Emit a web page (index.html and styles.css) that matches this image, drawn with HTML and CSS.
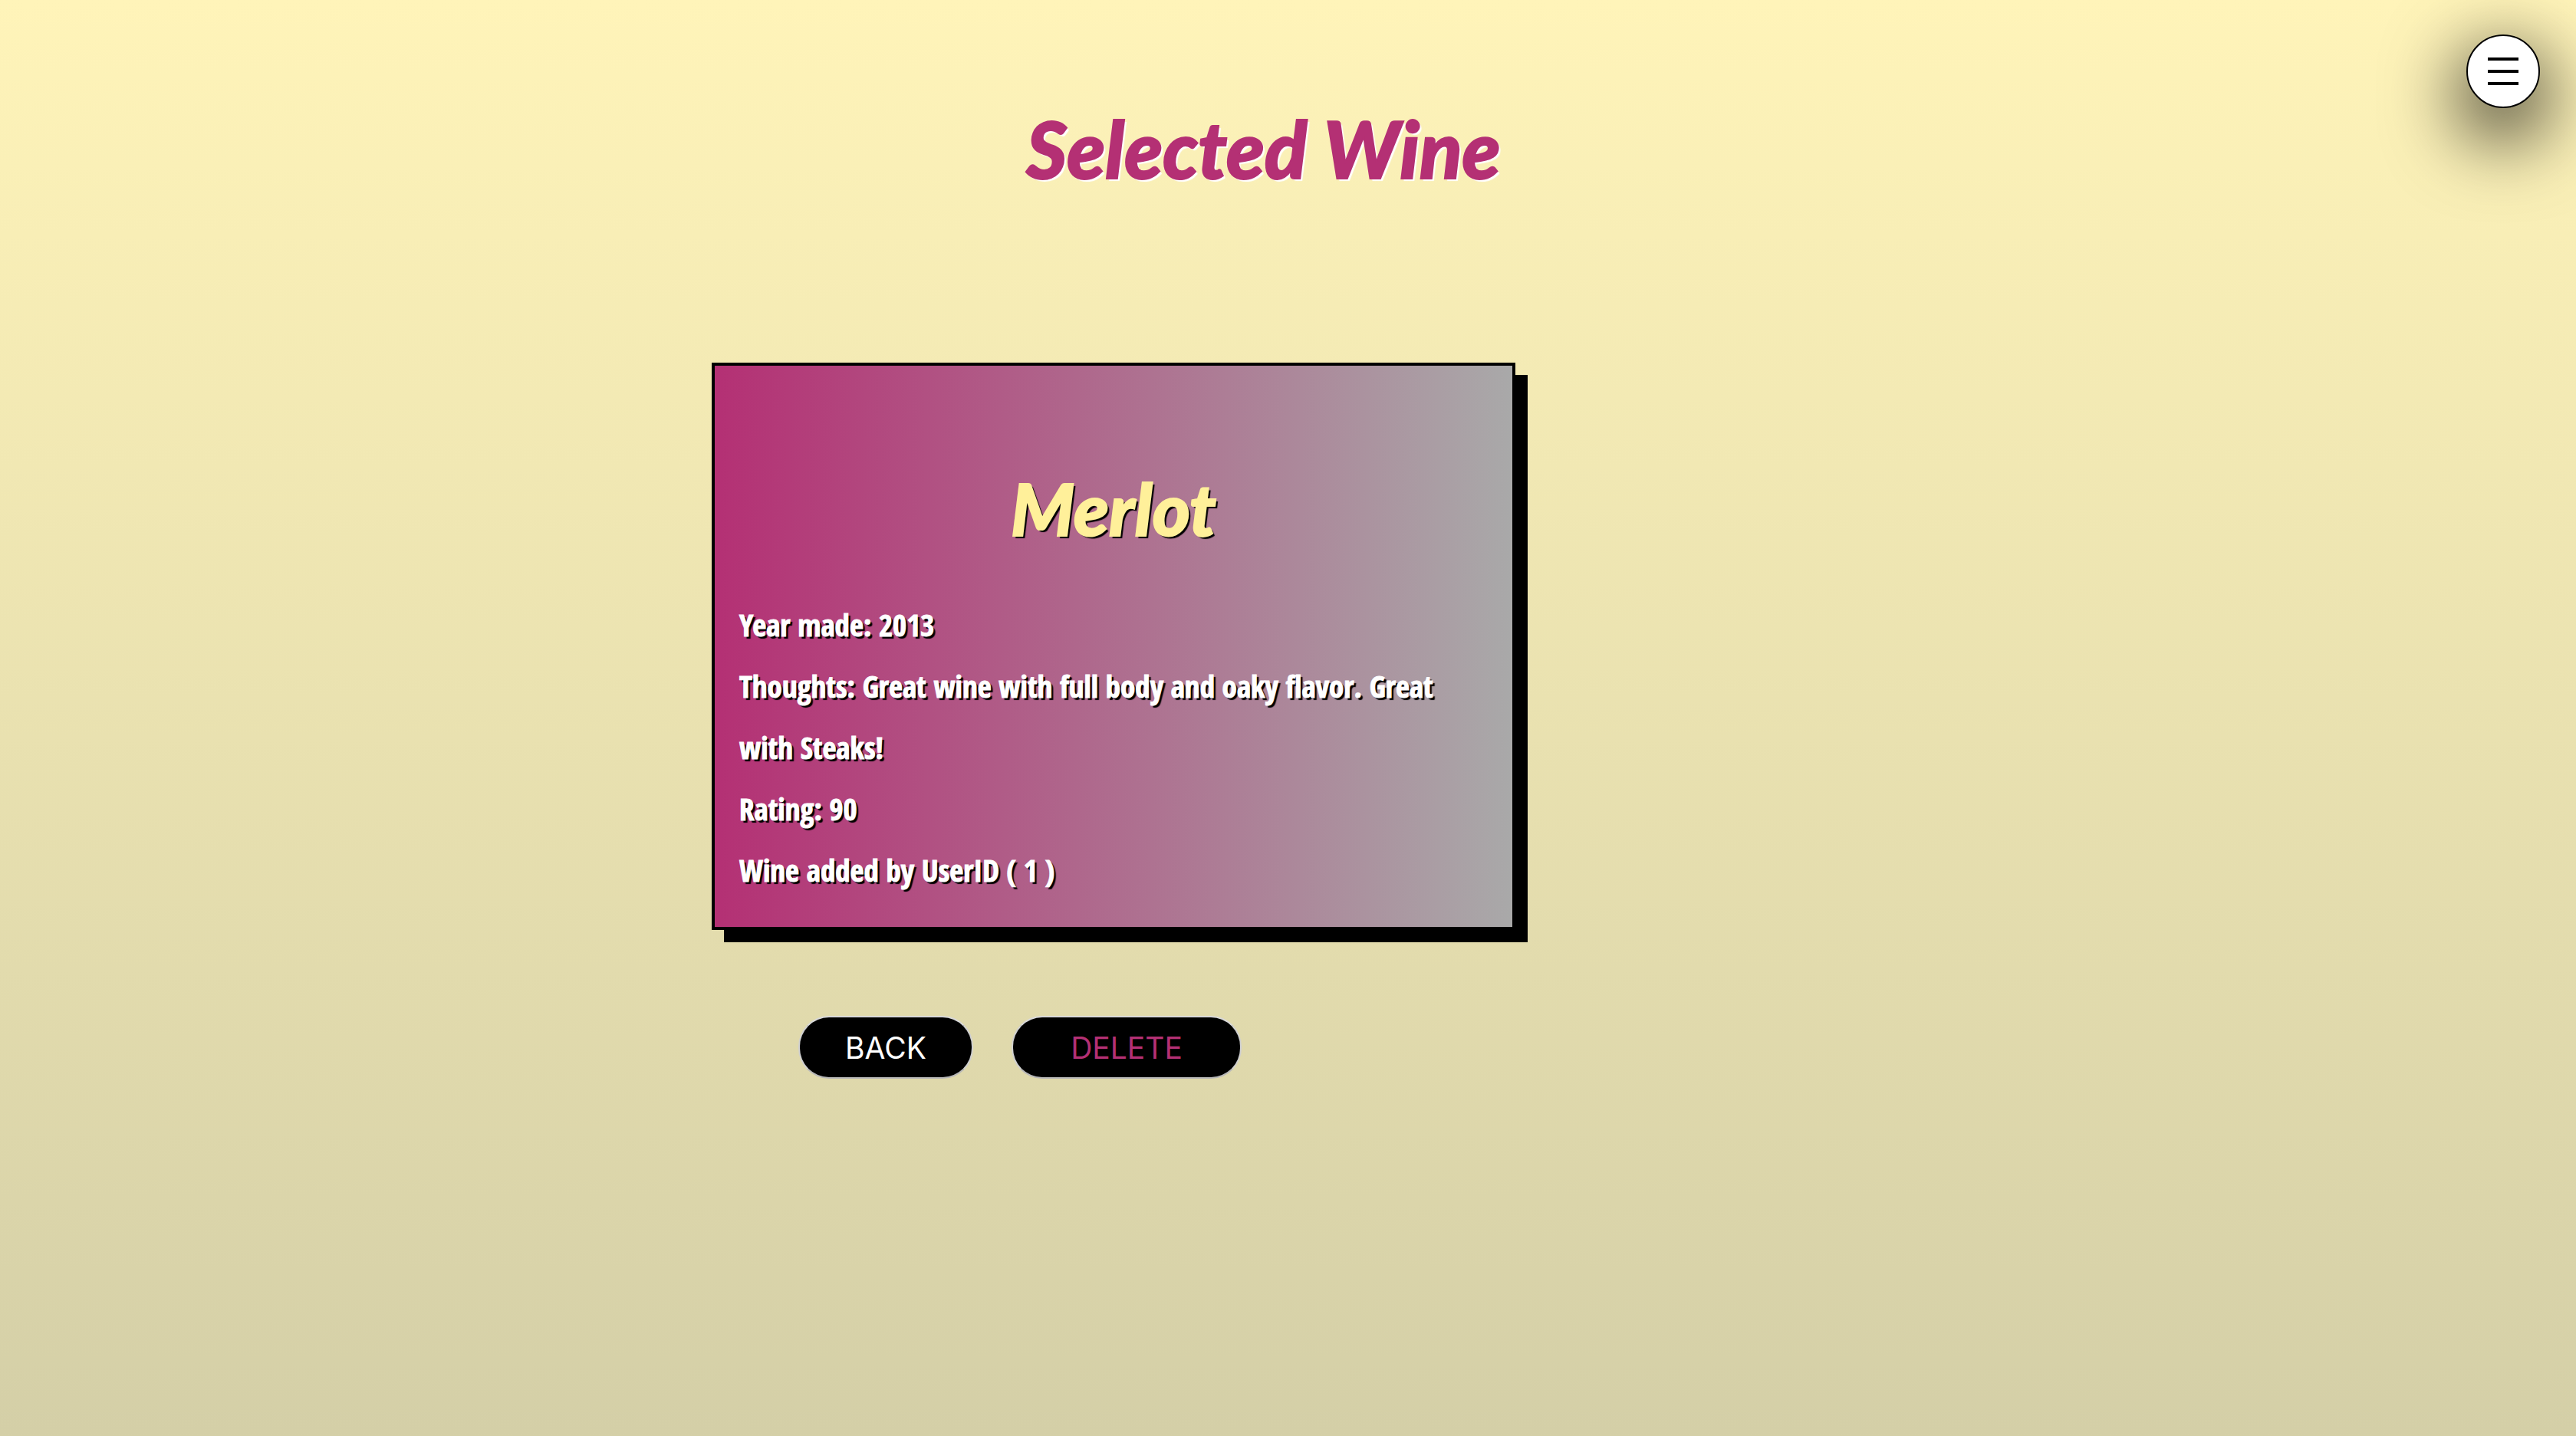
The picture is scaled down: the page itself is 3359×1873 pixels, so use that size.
FILE: index.html
```html
<!DOCTYPE html>
<html lang="en">
<head>
<meta charset="utf-8">
<meta name="viewport" content="width=device-width, initial-scale=1">
<title>Selected Wine</title>
<link rel="stylesheet" href="styles.css">
</head>
<body>
<button class="menu" type="button" aria-label="Menu">
  <svg class="menu-icon" viewBox="0 0 40 36" aria-hidden="true"><path d="M0 2H40M0 18H40M0 34H40" stroke="#000" stroke-width="4"/></svg>
</button>
<main class="page">
  <h1 class="title">Selected Wine</h1>
  <section class="wine">
    <article class="card">
      <h2 class="name">Merlot</h2>
      <p class="detail">Year made: 2013</p>
      <p class="detail">Thoughts: Great wine with full body and oaky flavor. Great with Steaks!</p>
      <p class="detail">Rating: 90</p>
      <p class="detail">Wine added by UserID ( 1 )</p>
    </article>
    <div class="actions">
      <button class="button" type="button">BACK</button>
      <button class="button button-delete" type="button">DELETE</button>
    </div>
  </section>
</main>
</body>
</html>
```

FILE: styles.css
```css
* {
  box-sizing: border-box;
}

body {
  margin: 0;
  min-height: 100vh;
  background: linear-gradient(#fff4b9, #d4cfa7);
  font-family: Inter, "Liberation Sans", sans-serif;
}

.page {
  padding: 124px 64px 64px 0;
}

.title,
.name {
  margin: 0;
  font-family: Lato, sans-serif;
  font-style: italic;
  font-weight: 900;
  text-align: center;
  -webkit-text-stroke: 2px currentColor;
}

.title {
  color: #b43074;
  font-size: 102px;
  line-height: 140px;
  text-shadow: 3px 3px 1px #fff;
}

.wine {
  width: 1048px;
  max-width: 100%;
  margin: 209px 0 0 928px;
}

.card {
  padding: 122px 32px 34px;
  border: 4px solid #000;
  background: linear-gradient(to right, #b43074, #a9a9a9);
  box-shadow: 16px 16px 0 #000;
}

.name {
  margin-bottom: 48px;
  color: #fff09a;
  font-size: 94px;
  line-height: 128px;
  text-shadow: 3px 3px 1px #000;
}

.detail {
  margin: 0;
  color: #fff;
  font-family: "Open Sans Condensed", "Liberation Sans Narrow", "Liberation Sans", sans-serif;
  font-size: 39px;
  font-weight: 700;
  line-height: 80px;
  text-shadow: 3px 3px 1px #000;
  -webkit-text-stroke: 1px currentColor;
}

.actions {
  display: flex;
  gap: 50px;
  margin: 112px 0 0 113px;
}

.button {
  width: 228px;
  height: 82px;
  padding: 0;
  border: 2px solid;
  border-color: #d8d8d8 #d0d0d0 #b8b8b8;
  border-radius: 40px;
  background: #000;
  color: #fff;
  font: 400 39px Inter, sans-serif;
}

.button-delete {
  width: 300px;
  color: #b43074;
}

.menu {
  position: fixed;
  top: 45px;
  right: 47px;
  display: grid;
  place-items: center;
  width: 96px;
  height: 96px;
  padding: 0;
  border: 2px solid #000;
  border-radius: 50%;
  background: #fff;
  box-shadow: 0 30px 96px 12px rgba(0, 0, 0, .75);
}

.menu-icon {
  width: 40px;
  height: 36px;
}
```
